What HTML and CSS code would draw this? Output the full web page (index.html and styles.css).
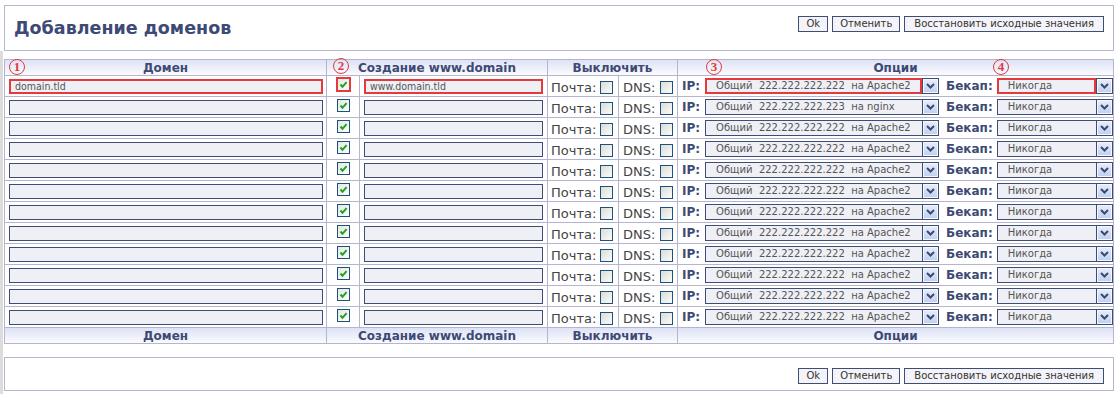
FILE: index.html
```html
<!DOCTYPE html>
<html lang="ru">
<head>
<meta charset="utf-8">
<title>Добавление доменов</title>
<link rel="stylesheet" href="styles.css">
</head>
<body>
<div class="page">
  <div class="panel panel-top">
    <h1 class="title">Добавление доменов</h1>
    <div class="buttons">
      <button class="btn">Ok</button>
      <button class="btn">Отменить</button>
      <button class="btn btn-reset">Восстановить исходные значения</button>
    </div>
  </div>

  <div class="frame">
    <table class="grid">
      <colgroup>
        <col class="w-domain"><col class="w-check"><col class="w-www"><col class="w-mail"><col class="w-dns"><col class="w-opts">
      </colgroup>
      <thead>
        <tr>
          <th class="hd">Домен<span class="num n1">1</span></th>
          <th class="hd" colspan="2">Создание www.domain<span class="num n2">2</span></th>
          <th class="hd" colspan="2">Выключить</th>
          <th class="hd">Опции<span class="num n3">3</span><span class="num n4">4</span></th>
        </tr>
      </thead>
      <tbody>
        <tr>
          <td class="c-domain"><div class="field marked">domain.tld</div></td>
          <td class="c-check"><span class="cb cb-on marked-cb"><svg viewBox="0 0 11 11" width="11" height="11"><path d="M2.5 5.5 L4.5 7.8 L8.6 3.2" fill="none" stroke="#21a121" stroke-width="2"/></svg></span></td>
          <td class="c-www"><div class="field marked">www.domain.tld</div></td>
          <td class="c-mail"><span class="lbl">Почта:</span><span class="cb"></span></td>
          <td class="c-dns"><span class="lbl">DNS:</span><span class="cb"></span></td>
          <td class="c-opts"><div class="opts"><b class="olbl">IP:</b><div class="sel sel-ip"><span class="sel-value marked">Общий  222.222.222.222  на Apache2</span><span class="sel-btn"><svg viewBox="0 0 9 6" width="9" height="6"><path d="M1 1 L4.5 4.5 L8 1" fill="none" stroke="#3c4a6e" stroke-width="2"/></svg></span></div><b class="olbl olbl-bk">Бекап:</b><div class="sel sel-bk"><span class="sel-value marked">Никогда</span><span class="sel-btn"><svg viewBox="0 0 9 6" width="9" height="6"><path d="M1 1 L4.5 4.5 L8 1" fill="none" stroke="#3c4a6e" stroke-width="2"/></svg></span></div></div></td>
        </tr>
        <tr>
          <td class="c-domain"><div class="field"></div></td>
          <td class="c-check"><span class="cb cb-on"><svg viewBox="0 0 11 11" width="11" height="11"><path d="M2.5 5.5 L4.5 7.8 L8.6 3.2" fill="none" stroke="#21a121" stroke-width="2"/></svg></span></td>
          <td class="c-www"><div class="field"></div></td>
          <td class="c-mail"><span class="lbl">Почта:</span><span class="cb"></span></td>
          <td class="c-dns"><span class="lbl">DNS:</span><span class="cb"></span></td>
          <td class="c-opts"><div class="opts"><b class="olbl">IP:</b><div class="sel sel-ip"><span class="sel-value">Общий  222.222.222.223  на nginx</span><span class="sel-btn"><svg viewBox="0 0 9 6" width="9" height="6"><path d="M1 1 L4.5 4.5 L8 1" fill="none" stroke="#3c4a6e" stroke-width="2"/></svg></span></div><b class="olbl olbl-bk">Бекап:</b><div class="sel sel-bk"><span class="sel-value">Никогда</span><span class="sel-btn"><svg viewBox="0 0 9 6" width="9" height="6"><path d="M1 1 L4.5 4.5 L8 1" fill="none" stroke="#3c4a6e" stroke-width="2"/></svg></span></div></div></td>
        </tr>
        <tr>
          <td class="c-domain"><div class="field"></div></td>
          <td class="c-check"><span class="cb cb-on"><svg viewBox="0 0 11 11" width="11" height="11"><path d="M2.5 5.5 L4.5 7.8 L8.6 3.2" fill="none" stroke="#21a121" stroke-width="2"/></svg></span></td>
          <td class="c-www"><div class="field"></div></td>
          <td class="c-mail"><span class="lbl">Почта:</span><span class="cb"></span></td>
          <td class="c-dns"><span class="lbl">DNS:</span><span class="cb"></span></td>
          <td class="c-opts"><div class="opts"><b class="olbl">IP:</b><div class="sel sel-ip"><span class="sel-value">Общий  222.222.222.222  на Apache2</span><span class="sel-btn"><svg viewBox="0 0 9 6" width="9" height="6"><path d="M1 1 L4.5 4.5 L8 1" fill="none" stroke="#3c4a6e" stroke-width="2"/></svg></span></div><b class="olbl olbl-bk">Бекап:</b><div class="sel sel-bk"><span class="sel-value">Никогда</span><span class="sel-btn"><svg viewBox="0 0 9 6" width="9" height="6"><path d="M1 1 L4.5 4.5 L8 1" fill="none" stroke="#3c4a6e" stroke-width="2"/></svg></span></div></div></td>
        </tr>
        <tr>
          <td class="c-domain"><div class="field"></div></td>
          <td class="c-check"><span class="cb cb-on"><svg viewBox="0 0 11 11" width="11" height="11"><path d="M2.5 5.5 L4.5 7.8 L8.6 3.2" fill="none" stroke="#21a121" stroke-width="2"/></svg></span></td>
          <td class="c-www"><div class="field"></div></td>
          <td class="c-mail"><span class="lbl">Почта:</span><span class="cb"></span></td>
          <td class="c-dns"><span class="lbl">DNS:</span><span class="cb"></span></td>
          <td class="c-opts"><div class="opts"><b class="olbl">IP:</b><div class="sel sel-ip"><span class="sel-value">Общий  222.222.222.222  на Apache2</span><span class="sel-btn"><svg viewBox="0 0 9 6" width="9" height="6"><path d="M1 1 L4.5 4.5 L8 1" fill="none" stroke="#3c4a6e" stroke-width="2"/></svg></span></div><b class="olbl olbl-bk">Бекап:</b><div class="sel sel-bk"><span class="sel-value">Никогда</span><span class="sel-btn"><svg viewBox="0 0 9 6" width="9" height="6"><path d="M1 1 L4.5 4.5 L8 1" fill="none" stroke="#3c4a6e" stroke-width="2"/></svg></span></div></div></td>
        </tr>
        <tr>
          <td class="c-domain"><div class="field"></div></td>
          <td class="c-check"><span class="cb cb-on"><svg viewBox="0 0 11 11" width="11" height="11"><path d="M2.5 5.5 L4.5 7.8 L8.6 3.2" fill="none" stroke="#21a121" stroke-width="2"/></svg></span></td>
          <td class="c-www"><div class="field"></div></td>
          <td class="c-mail"><span class="lbl">Почта:</span><span class="cb"></span></td>
          <td class="c-dns"><span class="lbl">DNS:</span><span class="cb"></span></td>
          <td class="c-opts"><div class="opts"><b class="olbl">IP:</b><div class="sel sel-ip"><span class="sel-value">Общий  222.222.222.222  на Apache2</span><span class="sel-btn"><svg viewBox="0 0 9 6" width="9" height="6"><path d="M1 1 L4.5 4.5 L8 1" fill="none" stroke="#3c4a6e" stroke-width="2"/></svg></span></div><b class="olbl olbl-bk">Бекап:</b><div class="sel sel-bk"><span class="sel-value">Никогда</span><span class="sel-btn"><svg viewBox="0 0 9 6" width="9" height="6"><path d="M1 1 L4.5 4.5 L8 1" fill="none" stroke="#3c4a6e" stroke-width="2"/></svg></span></div></div></td>
        </tr>
        <tr>
          <td class="c-domain"><div class="field"></div></td>
          <td class="c-check"><span class="cb cb-on"><svg viewBox="0 0 11 11" width="11" height="11"><path d="M2.5 5.5 L4.5 7.8 L8.6 3.2" fill="none" stroke="#21a121" stroke-width="2"/></svg></span></td>
          <td class="c-www"><div class="field"></div></td>
          <td class="c-mail"><span class="lbl">Почта:</span><span class="cb"></span></td>
          <td class="c-dns"><span class="lbl">DNS:</span><span class="cb"></span></td>
          <td class="c-opts"><div class="opts"><b class="olbl">IP:</b><div class="sel sel-ip"><span class="sel-value">Общий  222.222.222.222  на Apache2</span><span class="sel-btn"><svg viewBox="0 0 9 6" width="9" height="6"><path d="M1 1 L4.5 4.5 L8 1" fill="none" stroke="#3c4a6e" stroke-width="2"/></svg></span></div><b class="olbl olbl-bk">Бекап:</b><div class="sel sel-bk"><span class="sel-value">Никогда</span><span class="sel-btn"><svg viewBox="0 0 9 6" width="9" height="6"><path d="M1 1 L4.5 4.5 L8 1" fill="none" stroke="#3c4a6e" stroke-width="2"/></svg></span></div></div></td>
        </tr>
        <tr>
          <td class="c-domain"><div class="field"></div></td>
          <td class="c-check"><span class="cb cb-on"><svg viewBox="0 0 11 11" width="11" height="11"><path d="M2.5 5.5 L4.5 7.8 L8.6 3.2" fill="none" stroke="#21a121" stroke-width="2"/></svg></span></td>
          <td class="c-www"><div class="field"></div></td>
          <td class="c-mail"><span class="lbl">Почта:</span><span class="cb"></span></td>
          <td class="c-dns"><span class="lbl">DNS:</span><span class="cb"></span></td>
          <td class="c-opts"><div class="opts"><b class="olbl">IP:</b><div class="sel sel-ip"><span class="sel-value">Общий  222.222.222.222  на Apache2</span><span class="sel-btn"><svg viewBox="0 0 9 6" width="9" height="6"><path d="M1 1 L4.5 4.5 L8 1" fill="none" stroke="#3c4a6e" stroke-width="2"/></svg></span></div><b class="olbl olbl-bk">Бекап:</b><div class="sel sel-bk"><span class="sel-value">Никогда</span><span class="sel-btn"><svg viewBox="0 0 9 6" width="9" height="6"><path d="M1 1 L4.5 4.5 L8 1" fill="none" stroke="#3c4a6e" stroke-width="2"/></svg></span></div></div></td>
        </tr>
        <tr>
          <td class="c-domain"><div class="field"></div></td>
          <td class="c-check"><span class="cb cb-on"><svg viewBox="0 0 11 11" width="11" height="11"><path d="M2.5 5.5 L4.5 7.8 L8.6 3.2" fill="none" stroke="#21a121" stroke-width="2"/></svg></span></td>
          <td class="c-www"><div class="field"></div></td>
          <td class="c-mail"><span class="lbl">Почта:</span><span class="cb"></span></td>
          <td class="c-dns"><span class="lbl">DNS:</span><span class="cb"></span></td>
          <td class="c-opts"><div class="opts"><b class="olbl">IP:</b><div class="sel sel-ip"><span class="sel-value">Общий  222.222.222.222  на Apache2</span><span class="sel-btn"><svg viewBox="0 0 9 6" width="9" height="6"><path d="M1 1 L4.5 4.5 L8 1" fill="none" stroke="#3c4a6e" stroke-width="2"/></svg></span></div><b class="olbl olbl-bk">Бекап:</b><div class="sel sel-bk"><span class="sel-value">Никогда</span><span class="sel-btn"><svg viewBox="0 0 9 6" width="9" height="6"><path d="M1 1 L4.5 4.5 L8 1" fill="none" stroke="#3c4a6e" stroke-width="2"/></svg></span></div></div></td>
        </tr>
        <tr>
          <td class="c-domain"><div class="field"></div></td>
          <td class="c-check"><span class="cb cb-on"><svg viewBox="0 0 11 11" width="11" height="11"><path d="M2.5 5.5 L4.5 7.8 L8.6 3.2" fill="none" stroke="#21a121" stroke-width="2"/></svg></span></td>
          <td class="c-www"><div class="field"></div></td>
          <td class="c-mail"><span class="lbl">Почта:</span><span class="cb"></span></td>
          <td class="c-dns"><span class="lbl">DNS:</span><span class="cb"></span></td>
          <td class="c-opts"><div class="opts"><b class="olbl">IP:</b><div class="sel sel-ip"><span class="sel-value">Общий  222.222.222.222  на Apache2</span><span class="sel-btn"><svg viewBox="0 0 9 6" width="9" height="6"><path d="M1 1 L4.5 4.5 L8 1" fill="none" stroke="#3c4a6e" stroke-width="2"/></svg></span></div><b class="olbl olbl-bk">Бекап:</b><div class="sel sel-bk"><span class="sel-value">Никогда</span><span class="sel-btn"><svg viewBox="0 0 9 6" width="9" height="6"><path d="M1 1 L4.5 4.5 L8 1" fill="none" stroke="#3c4a6e" stroke-width="2"/></svg></span></div></div></td>
        </tr>
        <tr>
          <td class="c-domain"><div class="field"></div></td>
          <td class="c-check"><span class="cb cb-on"><svg viewBox="0 0 11 11" width="11" height="11"><path d="M2.5 5.5 L4.5 7.8 L8.6 3.2" fill="none" stroke="#21a121" stroke-width="2"/></svg></span></td>
          <td class="c-www"><div class="field"></div></td>
          <td class="c-mail"><span class="lbl">Почта:</span><span class="cb"></span></td>
          <td class="c-dns"><span class="lbl">DNS:</span><span class="cb"></span></td>
          <td class="c-opts"><div class="opts"><b class="olbl">IP:</b><div class="sel sel-ip"><span class="sel-value">Общий  222.222.222.222  на Apache2</span><span class="sel-btn"><svg viewBox="0 0 9 6" width="9" height="6"><path d="M1 1 L4.5 4.5 L8 1" fill="none" stroke="#3c4a6e" stroke-width="2"/></svg></span></div><b class="olbl olbl-bk">Бекап:</b><div class="sel sel-bk"><span class="sel-value">Никогда</span><span class="sel-btn"><svg viewBox="0 0 9 6" width="9" height="6"><path d="M1 1 L4.5 4.5 L8 1" fill="none" stroke="#3c4a6e" stroke-width="2"/></svg></span></div></div></td>
        </tr>
        <tr>
          <td class="c-domain"><div class="field"></div></td>
          <td class="c-check"><span class="cb cb-on"><svg viewBox="0 0 11 11" width="11" height="11"><path d="M2.5 5.5 L4.5 7.8 L8.6 3.2" fill="none" stroke="#21a121" stroke-width="2"/></svg></span></td>
          <td class="c-www"><div class="field"></div></td>
          <td class="c-mail"><span class="lbl">Почта:</span><span class="cb"></span></td>
          <td class="c-dns"><span class="lbl">DNS:</span><span class="cb"></span></td>
          <td class="c-opts"><div class="opts"><b class="olbl">IP:</b><div class="sel sel-ip"><span class="sel-value">Общий  222.222.222.222  на Apache2</span><span class="sel-btn"><svg viewBox="0 0 9 6" width="9" height="6"><path d="M1 1 L4.5 4.5 L8 1" fill="none" stroke="#3c4a6e" stroke-width="2"/></svg></span></div><b class="olbl olbl-bk">Бекап:</b><div class="sel sel-bk"><span class="sel-value">Никогда</span><span class="sel-btn"><svg viewBox="0 0 9 6" width="9" height="6"><path d="M1 1 L4.5 4.5 L8 1" fill="none" stroke="#3c4a6e" stroke-width="2"/></svg></span></div></div></td>
        </tr>
        <tr>
          <td class="c-domain"><div class="field"></div></td>
          <td class="c-check"><span class="cb cb-on"><svg viewBox="0 0 11 11" width="11" height="11"><path d="M2.5 5.5 L4.5 7.8 L8.6 3.2" fill="none" stroke="#21a121" stroke-width="2"/></svg></span></td>
          <td class="c-www"><div class="field"></div></td>
          <td class="c-mail"><span class="lbl">Почта:</span><span class="cb"></span></td>
          <td class="c-dns"><span class="lbl">DNS:</span><span class="cb"></span></td>
          <td class="c-opts"><div class="opts"><b class="olbl">IP:</b><div class="sel sel-ip"><span class="sel-value">Общий  222.222.222.222  на Apache2</span><span class="sel-btn"><svg viewBox="0 0 9 6" width="9" height="6"><path d="M1 1 L4.5 4.5 L8 1" fill="none" stroke="#3c4a6e" stroke-width="2"/></svg></span></div><b class="olbl olbl-bk">Бекап:</b><div class="sel sel-bk"><span class="sel-value">Никогда</span><span class="sel-btn"><svg viewBox="0 0 9 6" width="9" height="6"><path d="M1 1 L4.5 4.5 L8 1" fill="none" stroke="#3c4a6e" stroke-width="2"/></svg></span></div></div></td>
        </tr>
      </tbody>
      <tfoot>
        <tr>
          <th class="hd">Домен</th>
          <th class="hd" colspan="2">Создание www.domain</th>
          <th class="hd" colspan="2">Выключить</th>
          <th class="hd">Опции</th>
        </tr>
      </tfoot>
    </table>

    <div class="panel panel-bottom">
      <div class="buttons">
        <button class="btn">Ok</button>
        <button class="btn">Отменить</button>
        <button class="btn btn-reset">Восстановить исходные значения</button>
      </div>
    </div>
  </div>
</div>
</body>
</html>
```

FILE: styles.css
```css
* { box-sizing: border-box; }

body {
  margin: 0;
  background: #fff;
  font-family: "DejaVu Sans", Verdana, sans-serif;
  color: #3a3a3a;
}

.page { padding-top: 5px; }

.panel {
  width: 1110px;
  margin-left: 4px;
  border: 1px solid #b7b6d0;
  background: #fff;
  display: flex;
  align-items: flex-start;
}

.panel-top {
  height: 46px;
  padding: 10px 9px 0 9px;
  justify-content: space-between;
}

.panel-bottom {
  height: 34px;
  margin-top: 13px;
  margin-left: 0;
  padding: 10px 9px 0 9px;
  justify-content: flex-end;
}

.title {
  margin: 2px 0 0 0;
  font-size: 17.5px;
  line-height: 20px;
  font-weight: bold;
  color: #3d4a76;
}

.buttons { display: flex; gap: 4px; }

.btn {
  height: 16px;
  margin: 0;
  padding: 0 7px;
  border: 1px solid #3f4c74;
  border-radius: 0;
  background: #f4f4f8;
  font-family: "DejaVu Sans", Verdana, sans-serif;
  font-size: 10px;
  line-height: 14px;
  color: #333;
}

.btn-reset { padding: 0 9px; }

.frame {
  border-left: 3px solid #dcdcdc;
  padding: 8px 0 4px 1px;
}

.grid {
  width: 1110px;
  table-layout: fixed;
  border-collapse: separate;
  border-spacing: 0;
  border-left: 1px solid #b5b5cf;
  border-top: 1px solid #b5b5cf;
}

.w-domain { width: 322px; }
.w-check { width: 33px; }
.w-www { width: 188px; }
.w-mail { width: 71px; }
.w-dns { width: 59px; }
.w-opts { width: 436px; }

.grid th,
.grid td {
  padding: 0;
  border-right: 1px solid #b5b5cf;
  border-bottom: 1px solid #b5b5cf;
  vertical-align: middle;
}

.grid td { height: 21px; }

.hd {
  position: relative;
  height: 16px;
  background: linear-gradient(#dde2f5, #fbfbff);
  font-size: 12px;
  line-height: 14px;
  font-weight: bold;
  color: #3e4a74;
  text-align: center;
}

.num {
  position: absolute;
  top: -1px;
  width: 16px;
  height: 16px;
  border: 1px solid #e23b3b;
  border-radius: 50%;
  color: #e23b3b;
  font-family: "Liberation Serif", serif;
  font-size: 13px;
  font-weight: bold;
  line-height: 14px;
  text-align: center;
}
.n1 { left: 4px; }
.n2 { left: 6px; top: -2px; }
.n3 { left: 28px; }
.n4 { left: 315px; }

.c-domain { padding: 0 3px 0 4px !important; }
.c-www { padding: 0 4px !important; }
.grid td.c-check {
  text-align: center;
  vertical-align: top;
  padding-top: 2px;
  line-height: 0;
}
.c-mail { padding-left: 3px !important; white-space: nowrap; }
.c-dns { padding-left: 4px !important; white-space: nowrap; }
.c-opts { padding-left: 4px !important; }

.field {
  height: 15px;
  border: 1px solid #3f4c74;
  background: #eff0f6;
  padding-left: 5px;
  font-family: "DejaVu Sans Condensed", "DejaVu Sans", sans-serif;
  font-stretch: condensed;
  font-size: 10.5px;
  line-height: 13px;
  color: #555;
}

.field.marked {
  border: 2px solid #e5393c;
  padding-left: 4px;
  line-height: 11px;
}

.cb {
  display: inline-block;
  width: 13px;
  height: 13px;
  border: 1px solid #1c5180;
  background: linear-gradient(135deg, #dcdcd6, #fbfbf9);
  vertical-align: middle;
}
.cb svg { display: block; }
.cb-on { background: linear-gradient(135deg, #e6e6e1, #fdfdfd); }
.marked-cb { border-color: #e5393c; box-shadow: 0 0 0 1px #e5393c; }

.lbl {
  font-size: 13px;
  color: #444;
  vertical-align: middle;
  margin-right: 4px;
}
.c-dns .lbl { margin-right: 5px; }

.opts { display: flex; align-items: center; }

.olbl {
  font-size: 12px;
  font-weight: bold;
  color: #3e4a74;
  margin-right: 5px;
}
.olbl-bk { margin-left: 7px; margin-right: 4px; }

.sel { display: flex; height: 16px; }
.sel-ip { width: 234px; }
.sel-bk { flex: 1; }

.sel-value {
  flex: 1;
  min-width: 0;
  height: 16px;
  border: 1px solid #3f4c74;
  border-right: none;
  background: #eff0f6;
  padding-left: 10px;
  font-size: 10px;
  line-height: 14px;
  color: #555;
  white-space: pre;
  overflow: hidden;
}
.sel-value.marked {
  border: 2px solid #e5393c;
  padding-left: 9px;
  line-height: 12px;
}

.sel-btn {
  width: 17px;
  height: 16px;
  border: 1px solid #3f4c74;
  background: linear-gradient(#e8eefb, #bfcff0);
  box-shadow: inset 0 0 0 1px #f4f7fd;
  display: flex;
  align-items: center;
  justify-content: center;
}
```
